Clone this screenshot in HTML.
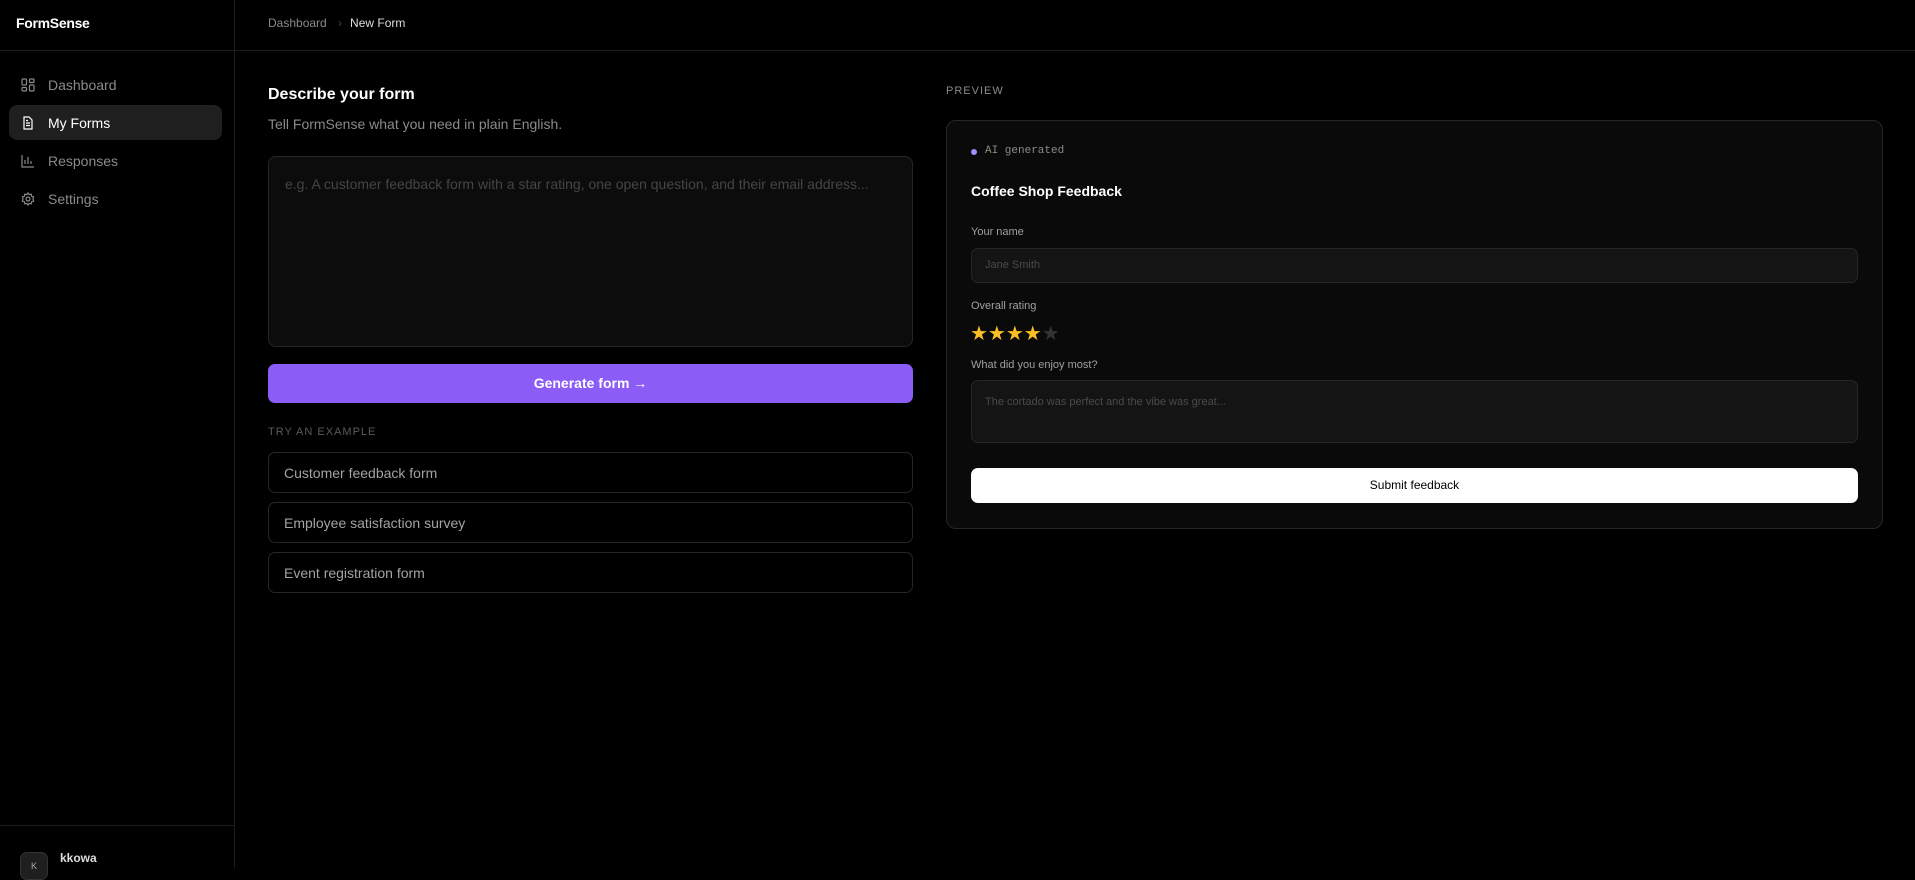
<!DOCTYPE html>
<html><head><meta charset="utf-8"><style>
*{box-sizing:border-box;margin:0;padding:0}
body{width:1915px;height:868px;background:#000;font-family:"Liberation Sans",sans-serif;color:#fff;position:relative;overflow:hidden}
.a{position:absolute}
.side{left:0;top:0;width:235px;height:868px;border-right:1px solid #1c1c1c}
.hl{height:1px;background:#1c1c1c}
.nav{left:9px;width:213px;height:35px;border-radius:8px;display:flex;align-items:center;padding-left:12px;font-size:14px;color:#8a8a8a}
.nav svg{margin-right:13px}
.nav.act{background:#1f1f1f;color:#fff}
.ex{left:268px;width:645px;height:41px;border:1px solid #262626;border-radius:7px;font-size:14px;color:#a3a3a3;padding-left:15px;display:flex;align-items:center}
.lbl{font-size:11px;color:#a0a0a0;left:971px}
</style></head><body>
<div class="a side"></div>
<div class="a hl" style="left:0;top:50px;width:1915px"></div>
<div class="a hl" style="left:0;top:825px;width:235px"></div>
<div class="a" style="left:16px;top:15px;font-size:14px;font-weight:bold;letter-spacing:-0.3px">FormSense</div>
<div class="a" style="left:268px;top:16px;font-size:12px;color:#8a8a8a">Dashboard <span style="color:#444;margin:0 8px">›</span><span style="color:#ddd">New Form</span></div>

<div class="a nav" style="top:67px"><svg width="14" height="14" viewBox="0 0 14 14" fill="none" stroke="#8a8a8a" stroke-width="1.2"><rect x="1" y="1" width="4.5" height="6" rx="1"/><rect x="8.5" y="1" width="4.5" height="3.5" rx="1"/><rect x="1" y="9.5" width="4.5" height="3.5" rx="1"/><rect x="8.5" y="7" width="4.5" height="6" rx="1"/></svg>Dashboard</div>
<div class="a nav act" style="top:105px"><svg width="14" height="14" viewBox="0 0 14 14" fill="none" stroke="#fff" stroke-width="1.2"><path d="M3 1h5l3 3v9H3z"/><path d="M5 7h4M5 9.5h4M5 4.5h2"/></svg>My Forms</div>
<div class="a nav" style="top:143px"><svg width="14" height="14" viewBox="0 0 14 14" fill="none" stroke="#8a8a8a" stroke-width="1.2"><path d="M1 1v12h12M4 10V6M7 10V3M10 10V7"/></svg>Responses</div>
<div class="a nav" style="top:181px"><svg width="14" height="14" viewBox="0 0 14 14" fill="none" stroke="#8a8a8a" stroke-width="1.2"><circle cx="7" cy="7" r="2"/><path d="M7 1l1.2 1.6 2-.4.4 2L12.6 5 12 7l.6 2-2 .8-.4 2-2-.4L7 13l-1.2-1.6-2 .4-.4-2L1.4 9 2 7l-.6-2 2-.8.4-2 2 .4z"/></svg>Settings</div>

<div class="a" style="left:20px;top:852px;width:28px;height:28px;border-radius:7px;background:#1f1f1f;border:1px solid #333;font-size:9px;color:#aaa;text-align:center;line-height:26px">K</div>
<div class="a" style="left:60px;top:851px;font-size:12px;font-weight:bold;color:#ddd">kkowa</div>

<div class="a" style="left:268px;top:86px;font-size:16px;font-weight:bold">Describe your form</div>
<div class="a" style="left:268px;top:116px;font-size:14px;color:#8a8a8a">Tell FormSense what you need in plain English.</div>
<div class="a" style="left:268px;top:156px;width:645px;height:191px;background:#0c0c0c;border:1px solid #262626;border-radius:8px;padding:19px 16px;font-size:14px;color:#454545">e.g. A customer feedback form with a star rating, one open question, and their email address...</div>
<div class="a" style="left:268px;top:364px;width:645px;height:39px;background:#8b5cf6;border-radius:7px;text-align:center;line-height:39px;font-size:14px;font-weight:bold">Generate form →</div>
<div class="a" style="left:268px;top:426px;font-size:11px;color:#5a5a5a;letter-spacing:1px">TRY AN EXAMPLE</div>
<div class="a ex" style="top:452px">Customer feedback form</div>
<div class="a ex" style="top:502px">Employee satisfaction survey</div>
<div class="a ex" style="top:552px">Event registration form</div>

<div class="a" style="left:946px;top:85px;font-size:11px;color:#8a8a8a;letter-spacing:1px">PREVIEW</div>
<div class="a" style="left:946px;top:120px;width:937px;height:409px;background:#0a0a0a;border:1px solid #262626;border-radius:10px"></div>
<div class="a" style="left:971px;top:149px;width:6px;height:6px;border-radius:50%;background:#a78bfa"></div>
<div class="a" style="left:985px;top:145px;font-family:'Liberation Mono',monospace;font-size:11px;color:#8a8a8a">AI generated</div>
<div class="a" style="left:971px;top:183px;font-size:14px;font-weight:bold">Coffee Shop Feedback</div>
<div class="a lbl" style="top:226px">Your name</div>
<div class="a" style="left:971px;top:248px;width:887px;height:35px;background:#141414;border:1px solid #262626;border-radius:7px;padding-left:13px;line-height:33px;font-size:11px;color:#4a4a4a">Jane Smith</div>
<div class="a lbl" style="top:300px">Overall rating</div>
<div class="a" style="left:970px;top:321px;font-size:20px;letter-spacing:0px;color:#fbbf24">★★★★<span style="color:#333">★</span></div>
<div class="a lbl" style="top:359px">What did you enjoy most?</div>
<div class="a" style="left:971px;top:380px;width:887px;height:63px;background:#141414;border:1px solid #262626;border-radius:7px;padding:15px 13px;font-size:11px;color:#4a4a4a">The cortado was perfect and the vibe was great...</div>
<div class="a" style="left:971px;top:468px;width:887px;height:35px;background:#fff;border-radius:7px;text-align:center;line-height:35px;font-size:12px;color:#000;font-weight:500">Submit feedback</div>
</body></html>
